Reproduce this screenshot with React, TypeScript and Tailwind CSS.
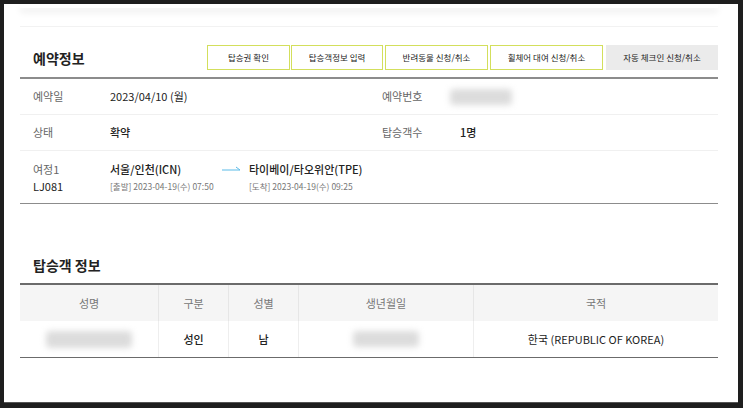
import { ReactNode } from 'react';

const FONT = { fontFamily: '"Noto Sans CJK KR", "Noto Sans", sans-serif' };

function ActionButton({ children, muted }: { children: ReactNode; muted?: boolean }) {
  return (
    <div
      className={
        'h-[25px] flex items-center justify-center text-[8.5px] text-[#222] ' +
        (muted ? 'bg-[#ebebeb]' : 'border border-[#d3df5c] bg-white')
      }
    >
      {children}
    </div>
  );
}

function Blur({ className }: { className: string }) {
  return <div className={'rounded-sm bg-[#dcdcdc] blur-[3px] ' + className} />;
}

export default function App() {
  return (
    <div className="w-[743px] h-[408px] bg-[#1e1e1e] pt-[4px] pl-[4px] pr-[5px] pb-[5px]" style={FONT}>
      <div className="w-full h-full bg-white border-b border-[#555] pl-[16px] pr-[20px] flex flex-col">
        {/* top card edge */}
        <div className="h-[4px] bg-white shadow-[0_4px_7px_rgba(0,0,0,0.09)]" />
        <div className="mt-[18px] h-px bg-[#f2f2f2]" />

        {/* 예약정보 header */}
        <div className="mt-[18px] flex items-center justify-between">
          <h2 className="pl-[13px] text-[14px] font-bold text-[#222] leading-none">예약정보</h2>
          <div className="flex items-center">
            <div className="w-[83px]"><ActionButton>탑승권 확인</ActionButton></div>
            <div className="w-[92px] ml-[1px]"><ActionButton>탑승객정보 입력</ActionButton></div>
            <div className="w-[103px] ml-[2px]"><ActionButton>반려동물 신청/취소</ActionButton></div>
            <div className="w-[113px] ml-[2px]"><ActionButton>휠체어 대여 신청/취소</ActionButton></div>
            <div className="w-[112px] ml-[3px]"><ActionButton muted>자동 체크인 신청/취소</ActionButton></div>
          </div>
        </div>

        {/* reservation info */}
        <div className="mt-[7px] border-t-2 border-[#8c8c8c] text-[11px]">
          <div className="h-[36px] flex items-center border-b border-[#f0f0f0]">
            <span className="pl-[13px] w-[90px] text-[#666]">예약일</span>
            <span className="w-[272px] text-[#222]">2023/04/10 (월)</span>
            <span className="w-[68px] text-[#666]">예약번호</span>
            <Blur className="w-[62px] h-[16px]" />
          </div>
          <div className="h-[36px] flex items-center border-b border-[#f0f0f0]">
            <span className="pl-[13px] w-[90px] text-[#666]">상태</span>
            <span className="w-[272px] font-medium text-[#222]">확약</span>
            <span className="w-[78px] text-[#666]">탑승객수</span>
            <span className="font-medium text-[#222]">1명</span>
          </div>
          <div className="h-[53px] flex items-center border-b border-[#8c8c8c]">
            <div className="pl-[13px] w-[90px] flex flex-col gap-[3px] leading-[14px]">
              <span className="text-[#666]">여정1</span>
              <span className="text-[#222]">LJ081</span>
            </div>
            <div className="w-[112px] flex flex-col gap-[3px]">
              <span className="leading-[14px] font-medium text-[#222]">서울/인천(ICN)</span>
              <span className="leading-[14px] text-[8.5px] text-[#777]">[출발] 2023-04-19(수) 07:50</span>
            </div>
            <div className="w-[27px] self-start mt-[14px]">
              <svg width="19" height="6" viewBox="0 0 19 6">
                <path d="M0 5 H18 M18 5 L14 2" stroke="#5bbbe8" strokeWidth="1" fill="none" />
              </svg>
            </div>
            <div className="flex flex-col gap-[3px]">
              <span className="leading-[14px] font-medium text-[#222]">타이베이/타오위안(TPE)</span>
              <span className="leading-[14px] text-[8.5px] text-[#777]">[도착] 2023-04-19(수) 09:25</span>
            </div>
          </div>
        </div>

        {/* 탑승객 정보 */}
        <h2 className="mt-[54px] pl-[13px] text-[14px] font-bold text-[#222] leading-none">탑승객 정보</h2>
        <div className="mt-[11px] border-t-2 border-b border-[#6b6b6b] text-[11px]">
          <div className="grid grid-cols-[139px_70px_70px_175px_1fr] h-[36px] bg-[#f5f5f5] text-[#777]">
            <div className="flex items-center justify-center border-r border-[#e6e6e6]">성명</div>
            <div className="flex items-center justify-center border-r border-[#e6e6e6]">구분</div>
            <div className="flex items-center justify-center border-r border-[#e6e6e6]">성별</div>
            <div className="flex items-center justify-center border-r border-[#e6e6e6]">생년월일</div>
            <div className="flex items-center justify-center">국적</div>
          </div>
          <div className="grid grid-cols-[139px_70px_70px_175px_1fr] h-[36px] text-[#222]">
            <div className="flex items-center justify-center border-r border-[#eee]">
              <Blur className="w-[86px] h-[17px]" />
            </div>
            <div className="flex items-center justify-center border-r border-[#eee] font-medium">성인</div>
            <div className="flex items-center justify-center border-r border-[#eee] font-medium">남</div>
            <div className="flex items-center justify-center border-r border-[#eee]">
              <Blur className="w-[66px] h-[16px]" />
            </div>
            <div className="flex items-center justify-center">한국 (REPUBLIC OF KOREA)</div>
          </div>
        </div>
      </div>
    </div>
  );
}
